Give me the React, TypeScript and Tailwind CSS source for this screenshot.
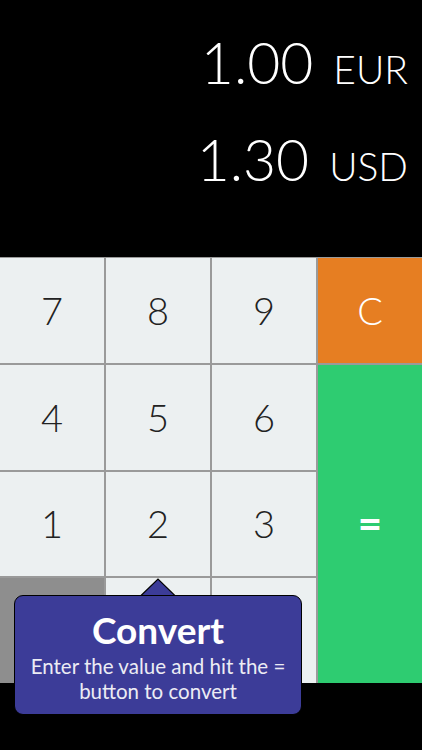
import React from "react";

const lato = { fontFamily: "Lato, 'Noto Sans', sans-serif" };

function Key({ label, className = "" }: { label?: string; className?: string }) {
  return (
    <div className={`flex items-center justify-center bg-[#ecf0f1] text-[38px] font-light text-[#222] ${className}`}>
      {label}
    </div>
  );
}

export default function App() {
  return (
    <div className="relative h-[750px] w-[422px] overflow-hidden bg-black font-['Lato',sans-serif]" style={lato}>
      <div className="flex h-[257px] flex-col items-end pr-[14px] pt-[34px] text-white">
        <div className="flex items-baseline gap-[20px] leading-none">
          <span className="text-[57px] font-light">1.00</span>
          <span className="text-[39px] font-light">EUR</span>
        </div>
        <div className="mt-[40px] flex items-baseline gap-[20px] leading-none">
          <span className="text-[57px] font-light">1.30</span>
          <span className="text-[39px] font-light">USD</span>
        </div>
      </div>
      <div className="grid h-[426px] grid-cols-4 grid-rows-4 gap-[2px] bg-[#9a9a9a] pt-[1px]">
        <Key label="7" />
        <Key label="8" />
        <Key label="9" />
        <div className="flex items-center justify-center bg-[#e67e22] text-[38px] font-light text-white">C</div>
        <Key label="4" />
        <Key label="5" />
        <Key label="6" />
        <div className="row-span-3 flex items-center justify-center bg-[#2ecc71] text-[42px] font-bold text-white">=</div>
        <Key label="1" />
        <Key label="2" />
        <Key label="3" />
        <div className="bg-[#8e8e8e]" />
        <Key />
        <Key />
      </div>
      <div className="absolute left-[14px] top-[595px] w-[288px]">
        <svg className="absolute left-[125px] top-[-17px]" width="38" height="19" viewBox="0 0 38 19">
          <polygon points="1,18.5 19,1 37,18.5" fill="#3c3c98" stroke="#000" strokeWidth="1.2" />
        </svg>
        <div className="relative flex h-[120px] flex-col items-center rounded-[9px] border border-black bg-[#3c3c98] pt-[13px] text-center">
          <div className="text-[37px] font-bold leading-[42px] text-white">Convert</div>
          <div className="mt-[3px] text-[20.5px] leading-[25px] text-[#ececf4]">
            Enter the value and hit the =<br />button to convert
          </div>
        </div>
        <div className="absolute left-[126px] top-[1px] h-[2px] w-[36px] bg-[#3c3c98]" />
      </div>
    </div>
  );
}
